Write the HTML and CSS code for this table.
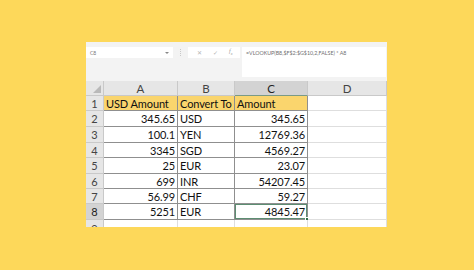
FILE: index.html
```html
<!DOCTYPE html>
<html>
<head>
<meta charset="utf-8">
<link rel="stylesheet" href="styles.css">
</head>
<body>
<div class="panel">
  <div class="toolbar">
    <div class="namebox"><span>C8</span><span class="caret"></span></div>
    <div class="sep"></div>
    <div class="fxbox">
      <span class="ic">✕</span>
      <span class="ic">✓</span>
      <span class="ic fx">f<sub>x</sub></span>
    </div>
    <div class="formula">=VLOOKUP(B8,$F$2:$G$10,2,FALSE) * A8</div>
  </div>
  <div class="grid">
    <div class="hd corner"><span class="tri"></span></div>
    <div class="hd col">A</div>
    <div class="hd col">B</div>
    <div class="hd col sel">C</div>
    <div class="hd col">D</div>

    <div class="hd row">1</div>
    <div class="c t head">USD Amount</div>
    <div class="c t head">Convert To</div>
    <div class="c t head">Amount</div>
    <div class="c"></div>

    <div class="hd row">2</div>
    <div class="c t n">345.65</div>
    <div class="c t">USD</div>
    <div class="c t n">345.65</div>
    <div class="c"></div>

    <div class="hd row">3</div>
    <div class="c t n">100.1</div>
    <div class="c t">YEN</div>
    <div class="c t n">12769.36</div>
    <div class="c"></div>

    <div class="hd row">4</div>
    <div class="c t n">3345</div>
    <div class="c t">SGD</div>
    <div class="c t n">4569.27</div>
    <div class="c"></div>

    <div class="hd row">5</div>
    <div class="c t n">25</div>
    <div class="c t">EUR</div>
    <div class="c t n">23.07</div>
    <div class="c"></div>

    <div class="hd row">6</div>
    <div class="c t n">699</div>
    <div class="c t">INR</div>
    <div class="c t n">54207.45</div>
    <div class="c"></div>

    <div class="hd row">7</div>
    <div class="c t n">56.99</div>
    <div class="c t">CHF</div>
    <div class="c t n">59.27</div>
    <div class="c"></div>

    <div class="hd row sel">8</div>
    <div class="c t n">5251</div>
    <div class="c t">EUR</div>
    <div class="c t n active">4845.47<span class="handle"></span></div>
    <div class="c"></div>

    <div class="hd row last">9</div>
    <div class="c"></div>
    <div class="c"></div>
    <div class="c"></div>
    <div class="c"></div>
  </div>
</div>
</body>
</html>
```
FILE: styles.css
```css
* { box-sizing: border-box; }
html, body { margin: 0; padding: 0; }
body {
  width: 474px;
  height: 270px;
  background: #fdd85a;
  overflow: hidden;
  font-family: Lato, "Open Sans", sans-serif;
  padding: 42px 0 0 86px;
}
.panel {
  width: 301px;
  height: 185px;
  background: #f3f3f3;
  overflow: hidden;
}
.toolbar {
  height: 39px;
  padding-top: 5px;
  display: flex;
  align-items: flex-start;
}
.namebox {
  width: 87px;
  height: 11px;
  background: #fff;
  display: flex;
  align-items: center;
  justify-content: space-between;
  padding: 0 4px 0 4px;
  font-size: 5px;
  color: #777;
}
.caret {
  width: 0; height: 0;
  border-left: 2px solid transparent;
  border-right: 2px solid transparent;
  border-top: 2px solid #888;
}
.sep {
  width: 1px;
  height: 7px;
  margin: 2px 7px 0 7px;
  border-left: 1px dotted #c8c8c8;
}
.fxbox {
  width: 52px;
  height: 11px;
  background: #fff;
  display: flex;
  align-items: center;
  justify-content: space-around;
  padding: 0 2px 0 4px;
  font-size: 6px;
  color: #b5b5b5;
}
.fxbox .fx { font-style: italic; font-family: "Liberation Serif", serif; color: #999; }
.fxbox sub { font-size: 4px; }
.formula {
  margin-left: 2px;
  width: 144px;
  height: 30px;
  background: #fff;
  font-size: 5.3px;
  color: #6f6f6f;
  padding: 3px 0 0 4px;
  white-space: nowrap;
  overflow: hidden;
}
.grid {
  display: grid;
  grid-template-columns: 18px 74px 57px 73px 79px;
  grid-template-rows: 15px 15px 16px 16px 15px 16px 15px 15px 16px 16px;
  background: #fff;
}
.hd {
  background: #e6e6e6;
  color: #444;
  font-size: 11px;
  display: flex;
  align-items: center;
  justify-content: center;
  border-right: 1px solid #c9c9c9;
  border-bottom: 1px solid #c9c9c9;
}
.hd.last { align-items: flex-start; padding-top: 2px; }
.hd.col { font-size: 11.5px; }
.hd.sel { background: #d3d3d3; color: #222; }
.hd.col.sel { border-bottom: 1px solid #7a9a86; }
.corner { position: relative; }
.tri {
  position: absolute;
  right: 2px;
  bottom: 2px;
  width: 0; height: 0;
  border-left: 8px solid transparent;
  border-bottom: 8px solid #b9b9b9;
}
.c {
  background: #fff;
  border-right: 1px solid #dedede;
  border-bottom: 1px solid #dedede;
  font-size: 11px;
  letter-spacing: -0.1px;
  color: #111;
  display: flex;
  align-items: center;
  padding: 0 2px;
  white-space: nowrap;
  overflow: hidden;
  position: relative;
}
.c.t {
  border-right: 1px solid #8f8f8f;
  border-bottom: 1px solid #8f8f8f;
}
.c.head { background: #fad56d; }
.c.n { justify-content: flex-end; }
.c.active {
  overflow: visible;
  box-shadow: inset 0 0 0 1px #5d8d72;
}
.handle {
  position: absolute;
  right: -2px;
  bottom: -2px;
  width: 4px;
  height: 4px;
  background: #2b6e48;
  border: 1px solid #fff;
}
```
